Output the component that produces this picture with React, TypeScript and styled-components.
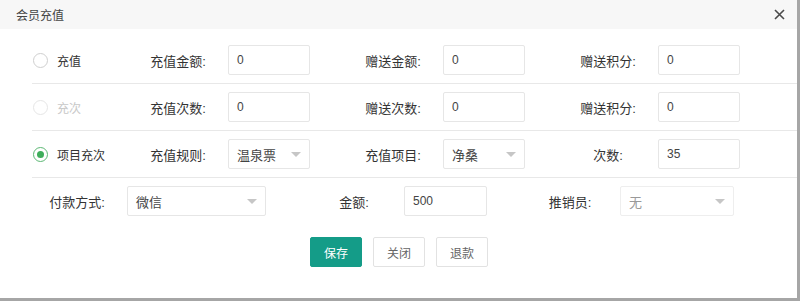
import { FC } from 'react';
import styled, { createGlobalStyle } from 'styled-components';

const GlobalStyle = createGlobalStyle`
  html, body {
    margin: 0;
    padding: 0;
    background: #a6a6a6;
  }
  body {
    font-family: 'Liberation Sans', 'Noto Sans CJK SC', sans-serif;
    color: #333;
  }
`;

const Dialog = styled.div`
  width: 797px;
  height: 298px;
  background: #fff;
  display: flex;
  flex-direction: column;
`;

const Header = styled.div`
  height: 29px;
  flex-shrink: 0;
  background: #f7f7f7;
  display: flex;
  align-items: center;
  justify-content: space-between;
  padding: 0 12px 0 16px;
  font-size: 12px;
  color: #444;
`;

const CloseBtn = styled.button`
  border: none;
  background: transparent;
  padding: 0;
  width: 12px;
  height: 14px;
  display: flex;
  align-items: center;
  justify-content: center;
  cursor: pointer;
`;

const Body = styled.div`
  padding-top: 8px;
`;

const OptionList = styled.div`
  margin-left: 32px;
`;

const OptionRow = styled.div`
  height: 46px;
  display: flex;
  align-items: center;
  border-bottom: 1px solid #e8e8e8;
  gap: 33px;
`;

const RadioCell = styled.label<{ $disabled?: boolean }>`
  width: 96px;
  margin-right: -33px;
  display: flex;
  align-items: center;
  gap: 9px;
  padding-left: 1px;
  box-sizing: border-box;
  font-size: 12px;
  color: ${(p) => (p.$disabled ? '#c8c8c8' : '#333')};
`;

const RadioDot = styled.span<{ $checked?: boolean; $disabled?: boolean }>`
  width: 15px;
  height: 15px;
  border-radius: 50%;
  box-sizing: border-box;
  border: 1px solid
    ${(p) => (p.$checked ? '#5cb874' : p.$disabled ? '#e6e6e6' : '#cfcfcf')};
  display: flex;
  align-items: center;
  justify-content: center;

  &::after {
    content: '';
    display: ${(p) => (p.$checked ? 'block' : 'none')};
    width: 7px;
    height: 7px;
    border-radius: 50%;
    background: #3fae5b;
  }
`;

const Field = styled.div<{ $shift?: number }>`
  display: flex;
  align-items: center;
  margin-left: ${(p) => p.$shift ?? 0}px;
`;

const Label = styled.span`
  width: 100px;
  text-align: center;
  font-size: 13px;
  color: #333;
`;

const Input = styled.div<{ $width: number }>`
  width: ${(p) => p.$width}px;
  height: 30px;
  box-sizing: border-box;
  border: 1px solid #e6e6e6;
  border-radius: 2px;
  padding: 0 8px;
  display: flex;
  align-items: center;
  font-size: 12px;
  color: #444;
`;

const Select = styled(Input)<{ $muted?: boolean }>`
  justify-content: space-between;
  font-size: 13px;
  color: ${(p) => (p.$muted ? '#999' : '#444')};
  border-color: ${(p) => (p.$muted ? '#eeeeee' : '#e6e6e6')};
`;

const Arrow = styled.span`
  width: 0;
  height: 0;
  border-left: 5px solid transparent;
  border-right: 5px solid transparent;
  border-top: 5px solid #c6c6c6;
`;

const PayRow = styled.div`
  height: 46px;
  display: flex;
  align-items: center;
  padding-left: 27px;
`;

const Footer = styled.div`
  display: flex;
  justify-content: center;
  gap: 11px;
  margin-top: 13px;
  padding-left: 1px;
`;

const Button = styled.button<{ $primary?: boolean }>`
  width: 52px;
  height: 30px;
  border-radius: 2px;
  font-family: inherit;
  font-size: 12px;
  cursor: pointer;
  border: 1px solid ${(p) => (p.$primary ? '#149c88' : '#e2e2e2')};
  background: ${(p) => (p.$primary ? '#149c88' : '#fff')};
  color: ${(p) => (p.$primary ? '#fff' : '#666')};
`;

type Opt = { label: string; checked?: boolean; disabled?: boolean };

const Dropdown: FC<{ value: string; width: number; muted?: boolean }> = ({
  value,
  width,
  muted,
}) => (
  <Select $width={width} $muted={muted}>
    <span>{value}</span>
    <Arrow />
  </Select>
);

const options: { opt: Opt; fields: [string, string, boolean?][] }[] = [
  {
    opt: { label: '充值' },
    fields: [
      ['充值金额:', '0'],
      ['赠送金额:', '0'],
      ['赠送积分:', '0'],
    ],
  },
  {
    opt: { label: '充次', disabled: true },
    fields: [
      ['充值次数:', '0'],
      ['赠送次数:', '0'],
      ['赠送积分:', '0'],
    ],
  },
  {
    opt: { label: '项目充次', checked: true },
    fields: [
      ['充值规则:', '温泉票', true],
      ['充值项目:', '净桑', true],
      ['次数:', '35'],
    ],
  },
];

const App: FC = () => {
  return (
    <>
      <GlobalStyle />
      <Dialog>
        <Header>
          <span>会员充值</span>
          <CloseBtn title='close'>
            <svg width='11' height='11' viewBox='0 0 11 11'>
              <path
                d='M1 1L10 10M10 1L1 10'
                stroke='#4a4a4a'
                strokeWidth='1.6'
                fill='none'
              />
            </svg>
          </CloseBtn>
        </Header>
        <Body>
          <OptionList>
            {options.map(({ opt, fields }) => (
              <OptionRow key={opt.label}>
                <RadioCell $disabled={opt.disabled}>
                  <RadioDot $checked={opt.checked} $disabled={opt.disabled} />
                  {opt.label}
                </RadioCell>
                {fields.map(([label, value, isSelect]) => (
                  <Field key={label}>
                    <Label>{label}</Label>
                    {isSelect ? (
                      <Dropdown value={value} width={82} />
                    ) : (
                      <Input $width={82}>{value}</Input>
                    )}
                  </Field>
                ))}
              </OptionRow>
            ))}
          </OptionList>
          <PayRow>
            <Field>
              <Label>付款方式:</Label>
              <Dropdown value='微信' width={139} />
            </Field>
            <Field $shift={38}>
              <Label>金额:</Label>
              <Input $width={83}>500</Input>
            </Field>
            <Field $shift={33}>
              <Label>推销员:</Label>
              <Dropdown value='无' width={114} muted />
            </Field>
          </PayRow>
          <Footer>
            <Button $primary>保存</Button>
            <Button>关闭</Button>
            <Button>退款</Button>
          </Footer>
        </Body>
      </Dialog>
    </>
  );
};

export default App;
